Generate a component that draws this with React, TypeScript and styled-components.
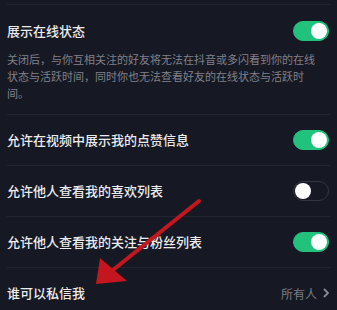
import React from "react";
import styled, { createGlobalStyle } from "styled-components";

const GlobalStyle = createGlobalStyle`
  html, body {
    margin: 0;
    padding: 0;
    background: #161823;
  }
  body {
    font-family: "Noto Sans CJK SC", "Noto Sans", sans-serif;
    overflow: hidden;
  }
`;

const Page = styled.div`
  position: relative;
  width: 337px;
  height: 310px;
  overflow: hidden;
  background: #161823;
  padding-top: 4px;
  box-sizing: border-box;
`;

const Divider = styled.div`
  height: 1px;
  margin: 0 7px;
  background: #23242f;
`;

const Section = styled.div`
  padding: 16px 8px 12px 7px;
`;

const Row = styled.div`
  height: 50px;
  display: flex;
  align-items: center;
  justify-content: space-between;
  padding: 0 8px 0 7px;
`;

const Head = styled.div`
  display: flex;
  align-items: center;
  justify-content: space-between;
  height: 20px;
`;

const Title = styled.span`
  font-size: 13px;
  line-height: 20px;
  color: #ececee;
  font-weight: 500;
`;

const Desc = styled.p`
  margin: 10px 0 0;
  width: 312px;
  font-size: 11px;
  line-height: 17px;
  color: #80818a;
`;

const Track = styled.div<{ $on: boolean }>`
  position: relative;
  width: 36px;
  height: 20px;
  border-radius: 10px;
  box-sizing: border-box;
  background: ${(p) => (p.$on ? "#20c27c" : "#161823")};
  border: 1px solid ${(p) => (p.$on ? "#20c27c" : "#34353f")};
`;

const Knob = styled.div<{ $on: boolean }>`
  position: absolute;
  top: 1px;
  left: ${(p) => (p.$on ? "17px" : "1px")};
  width: 16px;
  height: 16px;
  border-radius: 50%;
  background: #ffffff;
`;

const Value = styled.span`
  display: flex;
  align-items: center;
  gap: 6px;
  font-size: 12px;
  color: #7c7d86;
`;

const Arrow = styled.svg`
  position: absolute;
  left: 0;
  top: 0;
  pointer-events: none;
`;

const Toggle = ({ on }: { on: boolean }) => (
  <Track $on={on}>
    <Knob $on={on} />
  </Track>
);

const items = [
  { label: "允许在视频中展示我的点赞信息", on: true },
  { label: "允许他人查看我的喜欢列表", on: false },
  { label: "允许他人查看我的关注与粉丝列表", on: true },
];

export default function App() {
  return (
    <>
      <GlobalStyle />
      <Page>
        <Divider />
        <Section>
          <Head>
            <Title>展示在线状态</Title>
            <Toggle on />
          </Head>
          <Desc>
            关闭后，与你互相关注的好友将无法在抖音或多闪看到你的在线状态与活跃时间，同时你也无法查看好友的在线状态与活跃时间。
          </Desc>
        </Section>
        {items.map((it) => (
          <React.Fragment key={it.label}>
            <Divider />
            <Row>
              <Title>{it.label}</Title>
              <Toggle on={it.on} />
            </Row>
          </React.Fragment>
        ))}
        <Divider />
        <Row>
          <Title>谁可以私信我</Title>
          <Value>
            所有人
            <svg width="6" height="10" viewBox="0 0 6 10">
              <path d="M1 1l4 4-4 4" fill="none" stroke="#8a8b94" strokeWidth="1.8" />
            </svg>
          </Value>
        </Row>
        <Arrow width="337" height="310" viewBox="0 0 337 310">
          <line x1="199" y1="201" x2="108" y2="274" stroke="#c4161f" strokeWidth="4" strokeLinecap="round" />
          <polygon points="96,284 100,258 127,281" fill="#c4161f" />
        </Arrow>
      </Page>
    </>
  );
}
